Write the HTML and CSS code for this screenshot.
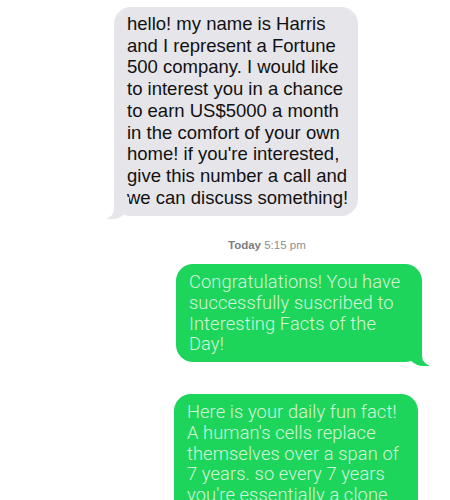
FILE: index.html
```html
<!DOCTYPE html>
<html lang="en">
<head>
<meta charset="utf-8">
<title>Messages</title>
<link rel="stylesheet" href="styles.css">
</head>
<body>
<div class="thread">
  <div class="bubble received">hello! my name is Harris<br>and I represent a Fortune<br>500 company. I would like<br>to interest you in a chance<br>to earn US$5000 a month<br>in the comfort of your own<br>home! if you're interested,<br>give this number a call and<br>we can discuss something!</div>
  <div class="stamp"><b>Today</b> 5:15 pm</div>
  <div class="bubble sent first">Congratulations! You have<br>successfully suscribed to<br>Interesting Facts of the<br>Day!</div>
  <div class="bubble sent second">Here is your daily fun fact!<br>A human's cells replace<br>themselves over a span of<br>7 years. so every 7 years<br>you're essentially a clone</div>
</div>
</body>
</html>
```

FILE: styles.css
```css
html, body {
  margin: 0;
  padding: 0;
  background: #ffffff;
  overflow: hidden;
  height: 500px;
}

.thread {
  display: flex;
  flex-direction: column;
  align-items: flex-start;
  padding-top: 7px;
}

.bubble {
  position: relative;
  box-sizing: border-box;
  border-radius: 17px;
  white-space: nowrap;
}

.received {
  margin-left: 114px;
  width: 244px;
  padding: 6px 10px 8px 13px;
  background: #e5e5ea;
  color: #111111;
  font-family: "Liberation Sans", Arial, sans-serif;
  font-size: 18.5px;
  line-height: 21.7px;
}

.received::before {
  content: "";
  position: absolute;
  left: -7px;
  bottom: -3px;
  width: 22px;
  height: 22px;
  background: #e5e5ea;
  border-bottom-right-radius: 16px;
}

.received::after {
  content: "";
  position: absolute;
  left: -12px;
  bottom: -3px;
  width: 12px;
  height: 22px;
  background: #ffffff;
  border-bottom-right-radius: 10px;
}

.stamp {
  margin: 22px 0 0 228px;
  font-family: "Liberation Sans", Arial, sans-serif;
  font-size: 11.5px;
  line-height: 14px;
  color: #8e8e93;
}

.stamp b {
  font-weight: bold;
  color: #7d7d82;
}

.sent {
  background: #1ed55c;
  color: #d4f6db;
  font-family: Roboto, "Liberation Sans", sans-serif;
  font-weight: 300;
  font-size: 18.3px;
  line-height: 20.7px;
  letter-spacing: 0.1px;
}

.sent::before {
  content: "";
  position: absolute;
  right: -7px;
  bottom: -4px;
  width: 22px;
  height: 22px;
  background: #1ed55c;
  border-bottom-left-radius: 16px;
}

.sent::after {
  content: "";
  position: absolute;
  right: -12px;
  bottom: -4px;
  width: 12px;
  height: 22px;
  background: #ffffff;
  border-bottom-left-radius: 10px;
}

.first {
  margin: 12px 0 0 176px;
  width: 246px;
  padding: 8px 10px 7px 13px;
}

.second {
  margin: 32px 0 0 174px;
  width: 244px;
  padding: 8px 10px 16px 13px;
}

.second::before,
.second::after {
  display: none;
}
```
